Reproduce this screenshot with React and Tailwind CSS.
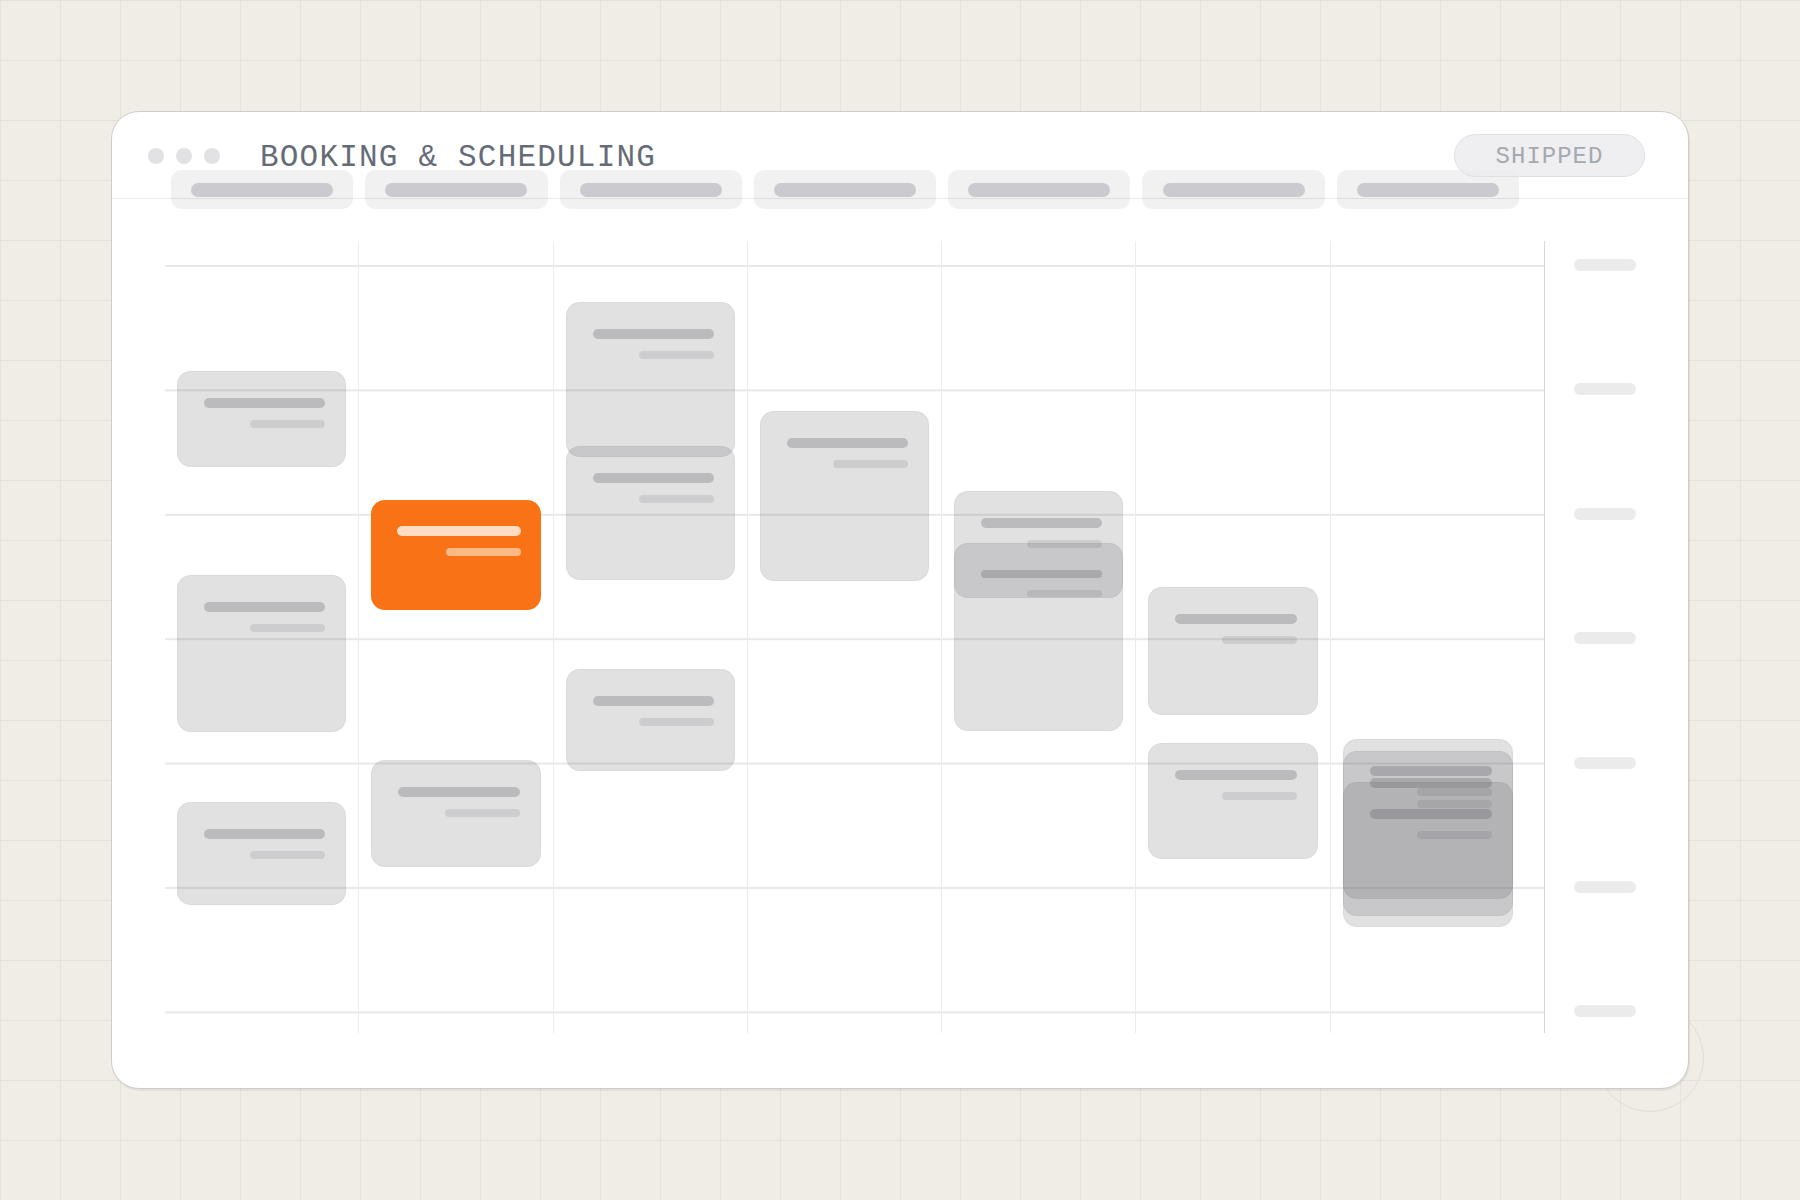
const days = [0, 1, 2, 3, 4, 5, 6];

// event blocks per day column: top / height in px inside the time grid
const events = [
  [
    { top: 130, h: 96 },
    { top: 334, h: 157 },
    { top: 561, h: 103 },
  ],
  [
    { top: 259, h: 110, active: true },
    { top: 519, h: 107 },
  ],
  [
    { top: 61, h: 155 },
    { top: 205, h: 134 },
    { top: 428, h: 102 },
  ],
  [{ top: 170, h: 170 }],
  [
    { top: 250, h: 240 },
    { top: 302, h: 55 },
  ],
  [
    { top: 346, h: 128 },
    { top: 502, h: 116 },
  ],
  [
    { top: 498, h: 188 },
    { top: 510, h: 165 },
    { top: 541, h: 117 },
  ],
];

function EventCard({ top, h, active }) {
  return (
    <div
      className={`absolute left-[12px] right-[12px] flex flex-col rounded-[14px] pl-[26px] pr-[20px] pt-[26px] ${
        active ? "bg-[#f97316]" : "border border-[rgba(75,76,82,0.05)] bg-[rgba(75,76,82,0.17)]"
      }`}
      style={{ top, height: h }}
    >
      <div className={`h-[10px] w-full rounded-full ${active ? "bg-[#ffdcc2]" : "bg-[rgba(75,76,82,0.25)]"}`} />
      <div className={`mt-[12px] h-[8px] w-[75px] self-end rounded-full ${active ? "bg-[#fdb888]" : "bg-[rgba(75,76,82,0.13)]"}`} />
    </div>
  );
}

export default function App() {
  return (
    <div className="relative h-screen w-full overflow-hidden bg-[#f0ede7] bg-[linear-gradient(to_right,#e5e2dc_1px,transparent_1px),linear-gradient(to_bottom,#e5e2dc_1px,transparent_1px)] bg-size-[60px_60px] p-[111px] font-['Liberation_Mono',monospace]">
      <div className="absolute left-[1596px] top-[1004px] h-[108px] w-[108px] rounded-full border border-[#e0ddd6]" />

      <div className="relative z-10 h-full w-full rounded-[28px] border-[1.5px] border-[#cfccc6] bg-white shadow-[1px_2px_0_rgba(0,0,0,0.06)]">
        <div className="flex h-[87px] items-start justify-between border-b border-[#ebebeb] pl-[36px] pr-[43px] pt-[22px]">
          <div className="flex h-[43px] items-center">
            <div className="flex gap-[12px]">
              <span className="h-[16px] w-[16px] rounded-full bg-[#e2e2e4]" />
              <span className="h-[16px] w-[16px] rounded-full bg-[#e2e2e4]" />
              <span className="h-[16px] w-[16px] rounded-full bg-[#e2e2e4]" />
            </div>
            <div className="ml-[40px] mt-[3px] text-[31px] leading-none tracking-[1.2px] text-[#656c78]">BOOKING &amp; SCHEDULING</div>
          </div>
          <div className="relative z-10 flex h-[43px] w-[191px] items-center justify-center rounded-full border border-[#dfe0e2] bg-[rgba(236,236,238,0.85)] pt-[2px] text-[24px] leading-none tracking-[1px] text-[#a5a8ad]">
            SHIPPED
          </div>
        </div>

        <div className="-mt-[29px] ml-[53px] grid w-[1360px] grid-cols-7">
          {days.map((d) => (
            <div key={d} className="px-[6px]">
              <div className="flex h-[39px] items-center justify-center rounded-[10px] bg-[rgba(0,0,0,0.055)]">
                <div className="h-[14px] w-[142px] rounded-full bg-[#cbcbcf]" />
              </div>
            </div>
          ))}
        </div>

        <div className="mt-[32px] ml-[53px] flex">
          <div className="flex h-[792px] w-[1380px] border-r-[1.5px] border-[#d6d6d8] bg-[linear-gradient(to_bottom,#e8e8ea_1.5px,transparent_1.5px)] bg-size-[100%_124.4px] bg-position-[0_24px]">
            {days.map((d) => (
              <div key={d} className={`relative h-full w-[194.3px] ${d < 6 ? "border-r border-[#ececee]" : ""}`}>
                {events[d].map((e, i) => (
                  <EventCard key={i} {...e} />
                ))}
              </div>
            ))}
          </div>
          <div className="flex flex-col gap-[112.4px] pl-[29px] pt-[18px]">
            {days.map((d) => (
              <div key={d} className="h-[12px] w-[62px] rounded-full bg-[#ebebec]" />
            ))}
          </div>
        </div>
      </div>
    </div>
  );
}
